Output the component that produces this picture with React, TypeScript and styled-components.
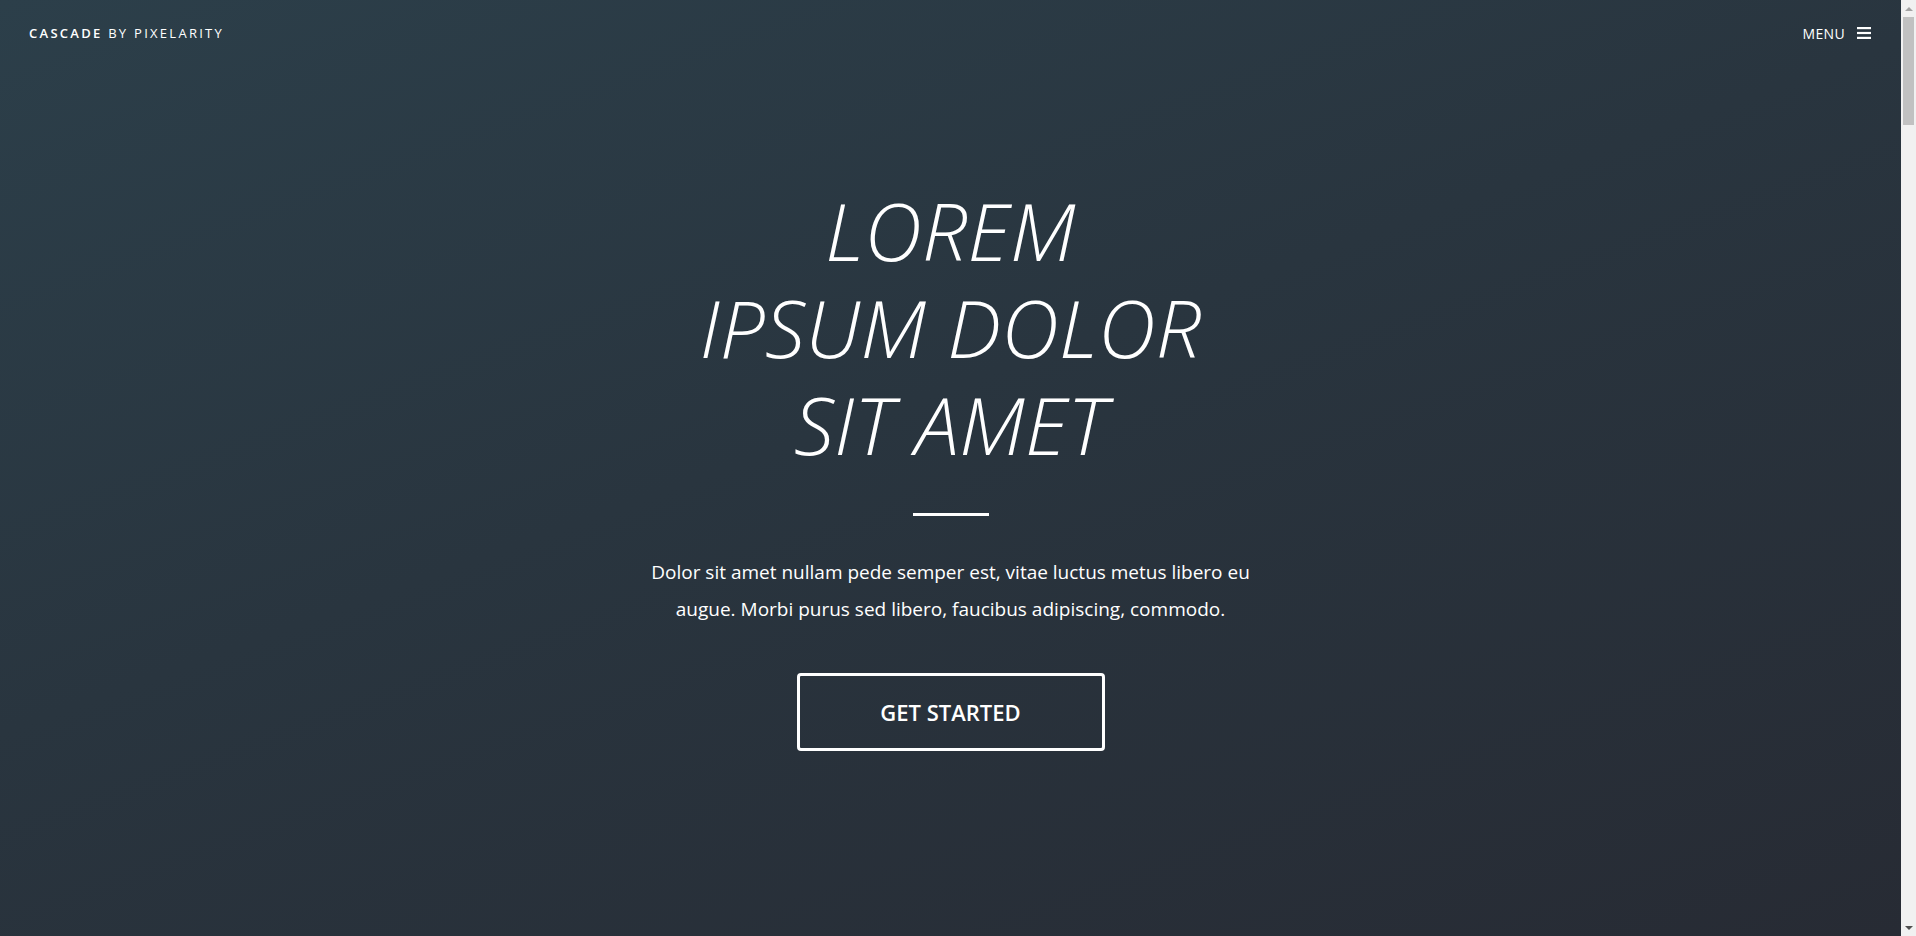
import React from "react";
import styled, { createGlobalStyle } from "styled-components";

const GlobalStyle = createGlobalStyle`
  html, body {
    margin: 0;
    padding: 0;
    height: 100%;
    overflow: hidden;
  }
  body {
    background: #272c35;
    color: #ffffff;
    font-family: "Open Sans", "Liberation Sans", sans-serif;
    -webkit-font-smoothing: antialiased;
  }
  * { box-sizing: border-box; }
`;

const Frame = styled.div`
  height: 100vh;
  display: flex;
`;

const Viewport = styled.main`
  flex: 1;
  min-width: 0;
  overflow-y: auto;
  scrollbar-width: none;
  background: #272c35;
  &::-webkit-scrollbar {
    display: none;
  }
`;

const ScrollBar = styled.div`
  width: 15px;
  flex: none;
  display: flex;
  flex-direction: column;
  background: #f1f1f1;
`;

const ScrollButton = styled.div<{ $dir: "up" | "down" }>`
  height: 17px;
  flex: none;
  display: flex;
  align-items: center;
  justify-content: center;
  &::before {
    content: "";
    width: 0;
    height: 0;
    border-left: 4px solid transparent;
    border-right: 4px solid transparent;
    ${({ $dir }) =>
      $dir === "up"
        ? "border-bottom: 4px solid #a3a3a3;"
        : "border-top: 4px solid #505050;"}
  }
`;

const ScrollTrack = styled.div`
  flex: 1;
  padding: 0 2px;
`;

const ScrollThumb = styled.div`
  height: 108px;
  background: #c1c1c1;
`;

const Page = styled.div`
  position: relative;
  background: #272b34;
`;

const Header = styled.header`
  position: absolute;
  top: 0;
  left: 0;
  right: 0;
  height: 66px;
  display: flex;
  align-items: center;
  justify-content: space-between;
  padding: 0 30px 0 29px;
  z-index: 10;
`;

const Logo = styled.a`
  font-size: 13px;
  letter-spacing: 0.175em;
  text-transform: uppercase;
  color: #ffffff;
  text-decoration: none;
  white-space: nowrap;
`;

const LogoStrong = styled.strong`
  font-weight: 600;
`;

const MenuToggle = styled.a`
  display: flex;
  align-items: center;
  gap: 12px;
  font-size: 14px;
  text-transform: uppercase;
  color: #ffffff;
  text-decoration: none;
  letter-spacing: 0.025em;
`;

const Hero = styled.section`
  height: 100vh;
  display: flex;
  flex-direction: column;
  align-items: center;
  justify-content: center;
  text-align: center;
  padding-bottom: 4px;
  background: linear-gradient(160deg, #2c3f4a 0%, #29353f 45%, #272b34 100%);
`;

const Title = styled.h1`
  margin: 0;
  font-size: 80px;
  line-height: 97px;
  font-weight: 300;
  font-style: italic;
  text-transform: uppercase;
  letter-spacing: 0.003em;
`;

const Divider = styled.hr`
  width: 76px;
  height: 3px;
  border: 0;
  background: #ffffff;
  margin: 41px auto 38px;
`;

const Lead = styled.p`
  margin: 0;
  max-width: 620px;
  font-size: 19px;
  line-height: 36.7px;
  font-weight: 400;
`;

const Button = styled.a`
  margin-top: 45px;
  width: 308px;
  height: 78px;
  display: flex;
  align-items: center;
  justify-content: center;
  border: 3px solid #ffffff;
  border-radius: 4px;
  color: #ffffff;
  font-size: 22px;
  font-weight: 600;
  text-transform: uppercase;
  text-decoration: none;
  letter-spacing: 0;
`;

const More = styled.section`
  min-height: 6400px;
  padding: 96px 30px;
  display: flex;
  flex-direction: column;
  align-items: center;
  gap: 24px;
  color: rgba(255, 255, 255, 0.75);
  font-size: 16px;
`;

const MoreHeading = styled.h2`
  margin: 0;
  font-size: 32px;
  font-weight: 300;
  text-transform: uppercase;
  letter-spacing: 0.05em;
  color: #ffffff;
`;

const BarsIcon = () => (
  <svg width="14" height="12" viewBox="0 0 14 12" aria-hidden="true">
    <rect x="0" y="0" width="14" height="2.2" fill="#ffffff" />
    <rect x="0" y="4.9" width="14" height="2.2" fill="#ffffff" />
    <rect x="0" y="9.8" width="14" height="2.2" fill="#ffffff" />
  </svg>
);

export default function App() {
  return (
    <>
      <GlobalStyle />
      <Frame>
        <Viewport>
          <Page>
            <Header>
              <Logo href="#">
                <LogoStrong>Cascade</LogoStrong> by Pixelarity
              </Logo>
              <MenuToggle href="#">
                Menu
                <BarsIcon />
              </MenuToggle>
            </Header>
            <Hero>
              <Title>
                Lorem
                <br />
                Ipsum Dolor
                <br />
                Sit Amet
              </Title>
              <Divider />
              <Lead>
                Dolor sit amet nullam pede semper est, vitae luctus metus libero
                eu augue. Morbi purus sed libero, faucibus adipiscing, commodo.
              </Lead>
              <Button href="#">Get Started</Button>
            </Hero>
            <More>
              <MoreHeading>Magna sed feugiat</MoreHeading>
              <p>
                Sed lorem ipsum dolor sit amet nullam consequat feugiat
                consequat magna adipiscing.
              </p>
            </More>
          </Page>
        </Viewport>
        <ScrollBar aria-hidden="true">
          <ScrollButton $dir="up" />
          <ScrollTrack>
            <ScrollThumb />
          </ScrollTrack>
          <ScrollButton $dir="down" />
        </ScrollBar>
      </Frame>
    </>
  );
}
